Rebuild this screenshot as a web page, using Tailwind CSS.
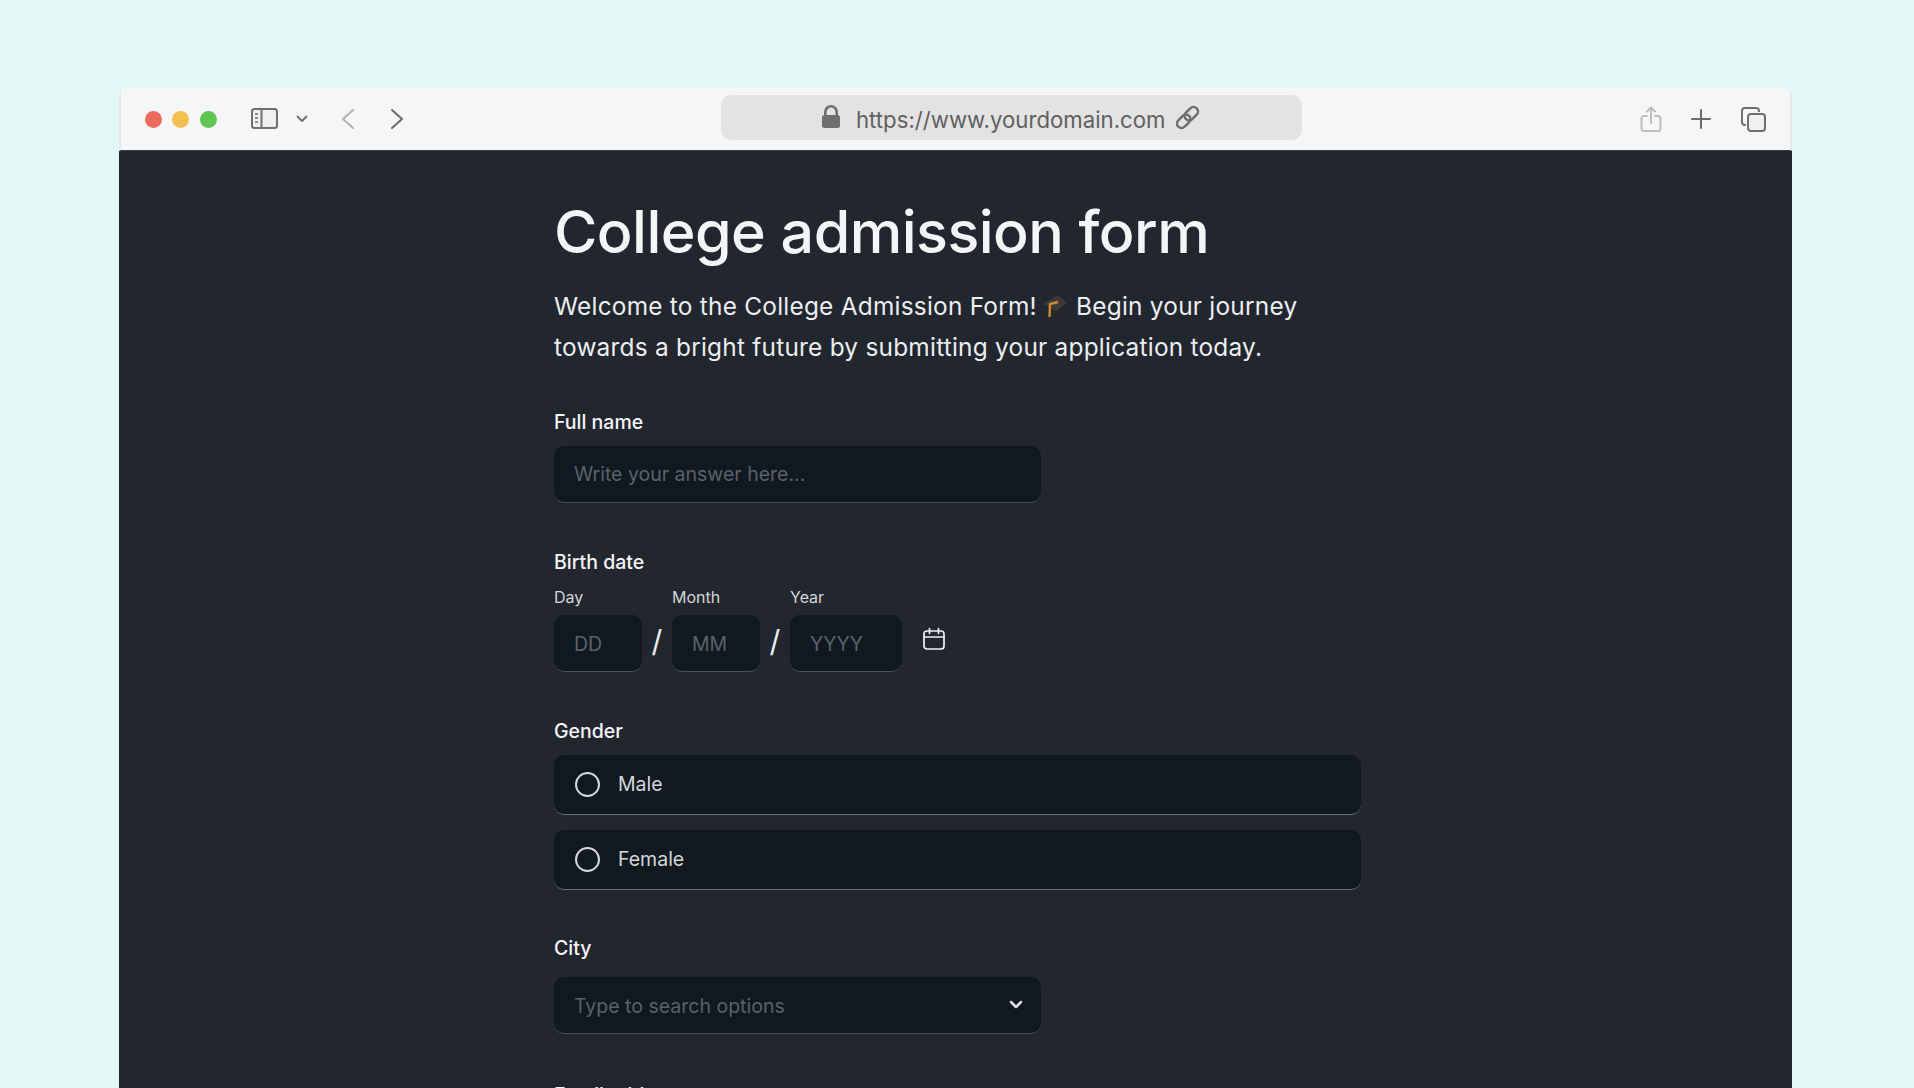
<!DOCTYPE html>
<html lang="en">
<head>
  <meta charset="UTF-8">
  <meta name="viewport" content="width=device-width, initial-scale=1.0">
  <script src="https://cdn.jsdelivr.net/npm/@tailwindcss/browser@4"></script>
  <title>College admission form</title>
</head>
<body class="bg-[#e3f7f4] h-screen overflow-hidden font-['Inter',sans-serif]">
  <div class="ml-[119px] mr-[122px] mt-[87.5px] h-[1001px] flex flex-col rounded-t-[8px] overflow-hidden">
    <!-- Browser toolbar -->
    <div class="h-[63px] shrink-0 bg-[#f5f6f8] border-x-2 border-x-[#e6e7e9] border-b border-b-[#3a3d42] pt-[1px] relative flex items-center">
      <div class="flex items-center gap-[10.5px] ml-[23.5px]">
        <span class="w-[17px] h-[17px] rounded-full bg-[#ec6a5e]"></span>
        <span class="w-[17px] h-[17px] rounded-full bg-[#f4bf4f]"></span>
        <span class="w-[17px] h-[17px] rounded-full bg-[#61c554]"></span>
      </div>
      <svg class="ml-[34.5px]" width="28" height="22" viewBox="0 0 28 22" fill="none" stroke="#6f6f72" stroke-width="2"><rect x="1" y="1" width="25" height="19" rx="2.5" fill="#f0f0f1"/><path d="M10.5 1v19"/><path d="M4 6h3M4 10h3M4 14h3" stroke-width="1.6"/></svg>
      <svg class="ml-[17px]" width="12" height="8" viewBox="0 0 12 8" fill="none" stroke="#6f6f72" stroke-width="1.8" stroke-linecap="round" stroke-linejoin="round"><path d="M1.5 1.5 6 6l4.5-4.5"/></svg>
      <svg class="ml-[33px]" width="14" height="22" viewBox="0 0 14 22" fill="none" stroke="#b3b3b5" stroke-width="2" stroke-linecap="round" stroke-linejoin="round"><path d="M12 2 2 11l10 9"/></svg>
      <svg class="ml-[35px]" width="14" height="22" viewBox="0 0 14 22" fill="none" stroke="#6a6a6d" stroke-width="2" stroke-linecap="round" stroke-linejoin="round"><path d="m2 2 10 9-10 9"/></svg>
      <!-- Address bar -->
      <div class="absolute left-[599.5px] top-[7.5px] w-[581px] h-[44.5px] rounded-[10px] bg-[#e3e3e3] flex items-center justify-center">
        <svg width="20" height="24" viewBox="0 0 20 24" fill="#6f6f72"><path d="M3 10V7a7 7 0 0 1 14 0v3h-2.6V7a4.4 4.4 0 0 0-8.8 0v3z"/><rect x="1" y="10" width="18" height="13" rx="2.5"/></svg>
        <span class="ml-[14.5px] mt-[5px] text-[22.2px] leading-none text-[#5f5f62]">https://www.yourdomain.com</span>
        <svg class="ml-[8px]" width="27" height="27" viewBox="0 0 24 24" fill="none" stroke="#6f6f72" stroke-width="2.2"><g transform="rotate(-45 12 12)"><rect x="0.500" y="8" width="13.500" height="8" rx="4"/><rect x="10" y="8" width="13.500" height="8" rx="4"/></g></svg>
      </div>
      <div class="ml-auto flex items-center">
        <svg width="22" height="27" viewBox="0 0 22 27" fill="none" stroke="#bdbdbf" stroke-width="2" stroke-linecap="round" stroke-linejoin="round"><path d="M7 10H4a2.5 2.5 0 0 0-2.5 2.5v10A2.5 2.5 0 0 0 4 25h14a2.5 2.5 0 0 0 2.5-2.5v-10A2.5 2.5 0 0 0 18 10h-3"/><path d="M11 17V2M7 5.500l4-4 4 4"/></svg>
        <svg class="ml-[29px]" width="20" height="20" viewBox="0 0 20 20" fill="none" stroke="#6a6a6d" stroke-width="2" stroke-linecap="round"><path d="M10 1v18M1 10h18"/></svg>
        <svg class="ml-[30px] mr-[24px]" width="25" height="25" viewBox="0 0 25 25" fill="none" stroke="#6f6f72" stroke-width="2"><path d="M5 18H4a3 3 0 0 1-3-3V4a3 3 0 0 1 3-3h11a3 3 0 0 1 3 3v1"/><rect x="7" y="7" width="17" height="17" rx="3" fill="#f0f0f1"/></svg>
      </div>
    </div>

    <!-- Page content -->
    <div class="flex-1 bg-[#22262f] pl-[435px] overflow-hidden">
      <h1 class="text-[59.2px] leading-[72px] font-[550] tracking-[-0.55px] text-[#f4f5f6] mt-[45.5px]">College admission form</h1>
      <p class="text-[24.4px] leading-[41.5px] tracking-[0.24px] text-[#eceef0] w-[807px] mt-[17.5px]">Welcome to the College Admission Form! <svg class="inline-block align-[-3px] -ml-[1px] mr-[2px]" width="24" height="24" viewBox="0 0 24 24"><path d="M5 12v5c3 3 9 4 13 1v-6l-5 4z" fill="#2b2926"/><path d="M0 10 15 1l9 8-11 8z" fill="#3d3a36"/><path d="M15 8 7 10l-.5 13" fill="none" stroke="#c98a34" stroke-width="2.400"/></svg> Begin your journey towards a bright future by submitting your application today.</p>

      <form class="mt-[39px]">
        <label class="block text-[19.500px] leading-[28px] font-medium text-[#f4f5f6]">Full name</label>
        <div class="mt-[10.5px] w-[487px] h-[57px] rounded-[10px] bg-[#101820] border-b border-[#4b5059] px-[20px] pt-[2px] flex items-center text-[19.500px] text-[#5c6169]">Write your answer here...</div>

        <label class="block mt-[44.5px] text-[19.500px] leading-[28px] font-medium text-[#f4f5f6]">Birth date</label>
        <div class="mt-[11.7px] flex items-start">
          <div class="w-[88px]">
            <div class="text-[16px] leading-[20px] text-[#d5d7da]">Day</div>
            <div class="mt-[8px] h-[57px] rounded-[10px] bg-[#101820] border-b border-[#4b5059] px-[20px] pt-[2px] flex items-center text-[19.500px] text-[#5c6169]">DD</div>
          </div>
          <div class="w-[30px] mt-[25.5px] h-[57px] flex items-center justify-center text-[30px] text-[#eceef0]">/</div>
          <div class="w-[88px]">
            <div class="text-[16px] leading-[20px] text-[#d5d7da]">Month</div>
            <div class="mt-[8px] h-[57px] rounded-[10px] bg-[#101820] border-b border-[#4b5059] px-[20px] pt-[2px] flex items-center text-[19.500px] text-[#5c6169]">MM</div>
          </div>
          <div class="w-[30px] mt-[25.5px] h-[57px] flex items-center justify-center text-[30px] text-[#eceef0]">/</div>
          <div class="w-[112px]">
            <div class="text-[16px] leading-[20px] text-[#d5d7da]">Year</div>
            <div class="mt-[8px] h-[57px] rounded-[10px] bg-[#101820] border-b border-[#4b5059] px-[20px] pt-[2px] flex items-center text-[19.500px] text-[#5c6169]">YYYY</div>
          </div>
          <svg class="ml-[20px] mt-[40px]" width="24" height="24" viewBox="0 0 24 24" fill="none" stroke="#f0f1f2" stroke-width="1.700" stroke-linecap="round" stroke-linejoin="round"><rect x="2" y="4" width="20" height="18" rx="3"/><path d="M2 10h20M7.500 1.500v5M16.500 1.500v5"/></svg>
        </div>

        <label class="block mt-[45px] text-[19.500px] leading-[28px] font-medium text-[#f4f5f6]">Gender</label>
        <div class="mt-[10px] w-[807px] h-[60px] rounded-[10px] bg-[#101820] border-b border-[#6a6f78] pl-[21px] flex items-center gap-[18px] text-[19.500px] text-[#d5d7da]">
          <span class="w-[25px] h-[25px] rounded-full border-[2.5px] border-[#d5d7da]"></span>Male
        </div>
        <div class="mt-[15px] w-[807px] h-[60px] rounded-[10px] bg-[#101820] border-b border-[#6a6f78] pl-[21px] flex items-center gap-[18px] text-[19.500px] text-[#d5d7da]">
          <span class="w-[25px] h-[25px] rounded-full border-[2.5px] border-[#d5d7da]"></span>Female
        </div>

        <label class="block mt-[44px] text-[19.500px] leading-[28px] font-medium text-[#f4f5f6]">City</label>
        <div class="mt-[15px] w-[487px] h-[57px] rounded-[10px] bg-[#101820] border-b border-[#4b5059] pl-[20px] pr-[18px] flex items-center justify-between text-[19.500px] text-[#5c6169]">
          <span class="pt-[2px]">Type to search options</span>
          <svg width="14" height="10" viewBox="0 0 14 10" fill="none" stroke="#dfe1e4" stroke-width="2.500" stroke-linecap="round" stroke-linejoin="round"><path d="m2 2 5 5 5-5"/></svg>
        </div>

        <label class="block mt-[47px] text-[19.500px] leading-[28px] font-medium text-[#f4f5f6]">Email address</label>
      </form>
    </div>
  </div>
</body>
</html>
